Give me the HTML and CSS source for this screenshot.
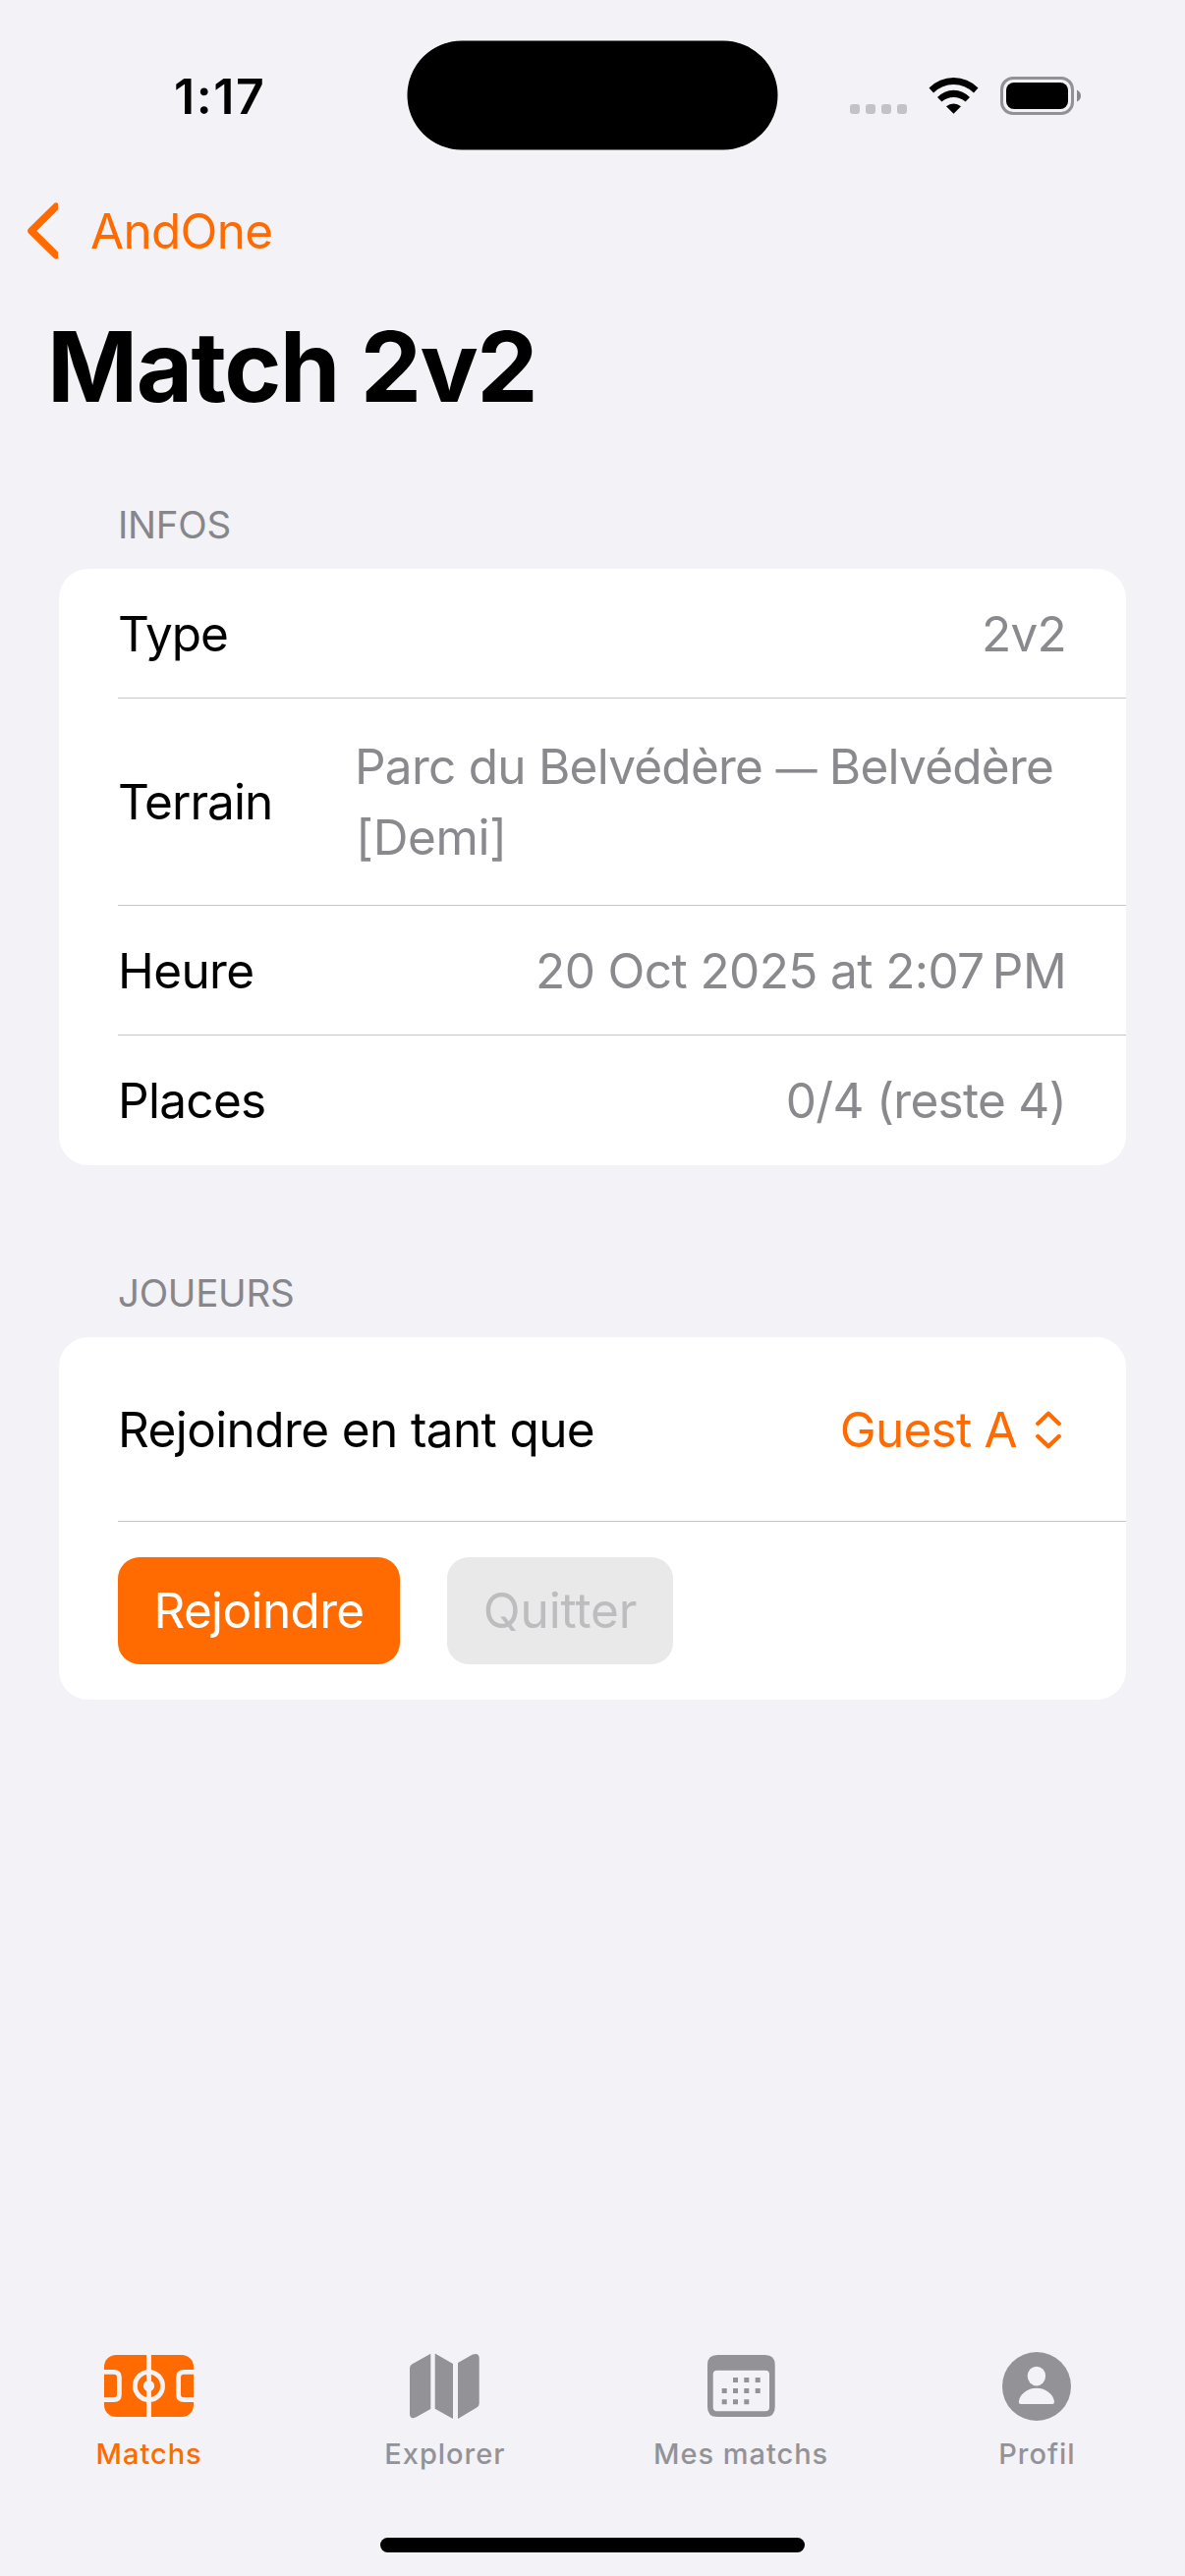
FILE: index.html
```html
<!DOCTYPE html>
<html lang="fr">
<head>
<meta charset="utf-8">
<title>Match 2v2</title>
<link rel="stylesheet" href="styles.css">
</head>
<body>
<div class="screen">
  <div class="status">
    <span class="time">1:17</span>
    <span class="island"></span>
    <div class="indicators">
      <svg class="cell" width="58" height="40" viewBox="0 0 58 40"><rect x="0" y="28" width="10" height="10" rx="3"/><rect x="16" y="28" width="10" height="10" rx="3"/><rect x="32" y="28" width="10" height="10" rx="3"/><rect x="48" y="28" width="10" height="10" rx="3"/></svg>
      <svg class="wifi" width="51" height="40" viewBox="0 0 51 40"><path d="M.5 11.5A35 35 0 0 1 50.5 11.5L46 16.5A29 29 0 0 0 5 16.5ZM9 21A22.5 22.5 0 0 1 42 21L37.5 25.5A18 18 0 0 0 13.500 25.500ZM18 30.200A12 12 0 0 1 33 30.200L25.500 37.800Z"/></svg>
      <svg class="battery" width="83" height="40" viewBox="0 0 83 40"><rect x="1.500" y="1.500" width="72" height="36" rx="11.500" fill="none" stroke="#929295" stroke-width="3"/><rect x="6" y="6" width="63" height="27" rx="8"/><path fill="#88888b" d="M78 13.500Q82 15.500 82 19.500T78 25.500Z"/></svg>
    </div>
  </div>
  <nav class="navbar">
    <svg width="34" height="60" viewBox="0 0 34 60"><path d="M32 5.300L7 30L32 54.700" fill="none" stroke="currentColor" stroke-width="7.500" stroke-linecap="round" stroke-linejoin="round"/></svg>
    <span>AndOne</span>
  </nav>
  <h1 class="title">Match 2v2</h1>

  <section class="section">
    <h2 class="heading">INFOS</h2>
    <div class="card">
      <div class="row"><span class="tight">Type</span><span class="value">2v2</span></div>
      <div class="row tall"><span class="tight">Terrain</span><span class="value long">Parc du Belvédère <span class="dash">—</span> Belvédère <span class="court">[Demi]</span></span></div>
      <div class="row"><span class="loose">Heure</span><span class="value date">20 Oct 2025 at 2:07&#8239;PM</span></div>
      <div class="row"><span>Places</span><span class="value">0/4 (reste 4)</span></div>
    </div>
  </section>

  <section class="section">
    <h2 class="heading">JOUEURS</h2>
    <div class="card">
      <div class="row picker"><span class="prompt">Rejoindre en tant que</span>
        <span class="choice">Guest A
          <svg width="26" height="39" viewBox="0 0 26 39"><path d="M2.300 13L13 2.800L23.700 13M2.300 26L13 36.200L23.700 26" fill="none" stroke="currentColor" stroke-width="4.300" stroke-linecap="round" stroke-linejoin="round"/></svg>
        </span>
      </div>
      <div class="row actions"><button class="btn join">Rejoindre</button><button class="btn leave" disabled>Quitter</button></div>
    </div>
  </section>

  <footer class="tabbar">
    <div class="tabs">
      <div class="tab active">
        <svg width="91" height="70" viewBox="0 -3 91 70"><rect width="91" height="63" rx="12" fill="currentColor"/><g fill="none" stroke="#f2f2f7" stroke-width="4.800"><path d="M45.500 0V63"/><circle cx="45.500" cy="31.500" r="14.100"/><path d="M0 17.300H10Q15.400 17.300 15.400 22.700V40.300Q15.400 45.700 10 45.700H0M91 17.300H81Q75.600 17.300 75.600 22.700V40.300Q75.600 45.700 81 45.700H91"/></g><circle cx="45.500" cy="31.500" r="5.600" fill="#f2f2f7"/></svg>
        <span>Matchs</span>
      </div>
      <div class="tab">
        <svg width="71" height="70" viewBox="0 -1 71 70" fill="currentColor"><path d="M21.300 .700V57L6.500 65.300Q0 68 0 62V15.500Q0 12.700 2.500 11.200ZM25.700 .400L44 11V66.900L25.700 56.700ZM49 10L64 1.600Q70.700-.800 70.700 5.500V51.500Q70.700 54 68.200 55.500L49 66.900Z"/></svg>
        <span>Explorer</span>
      </div>
      <div class="tab">
        <svg width="69" height="70" viewBox="0 -3 69 70" fill="currentColor"><path fill-rule="evenodd" d="M10 0H58.700Q68.700 0 68.700 10V53Q68.700 63 58.700 63H10Q0 63 0 53V10Q0 0 10 0ZM9.700 15.700Q5.700 15.700 5.700 19.700V53.300Q5.700 57.300 9.700 57.300H59Q63 57.300 63 53.300V19.700Q63 15.700 59 15.700Z"/><path d="M26 23h5v5h-5zM37.300 23h5v5h-5zM48.700 23h5v5h-5zM14.700 34h5v5h-5zM26 34h5v5h-5zM37.300 34h5v5h-5zM48.700 34h5v5h-5zM14.700 45.300h5v5h-5zM26 45.300h5v5h-5zM37.300 45.300h5v5h-5z"/></svg>
        <span>Mes matchs</span>
      </div>
      <div class="tab">
        <svg width="70" height="70" viewBox="0 0 70 70"><circle cx="35" cy="35" r="35" fill="currentColor"/><g fill="#f2f2f7"><ellipse cx="34.900" cy="24.600" rx="9.200" ry="9.900"/><path d="M18.700 53Q16.800 53 16.800 50.800C17.500 43 25.500 36.700 34.900 36.700S52.300 43 53 50.800Q53 53 51.100 53Z"/></g></svg>
        <span>Profil</span>
      </div>
    </div>
    <div class="home"></div>
  </footer>
</div>
</body>
</html>
```
FILE: styles.css
```css
* { box-sizing: border-box; }
body {
  margin: 0;
  background: #f2f2f7;
  color: #000;
  font: 400 49.5px/72px Inter, "Liberation Sans", sans-serif;
  letter-spacing: -0.7px;
}
svg { display: block; flex: none; }
.screen { width: 1206px; height: 2622px; display: flex; flex-direction: column; }

.status {
  display: grid;
  grid-template-columns: 415px 376px 415px;
  align-items: center;
  height: 152px;
  padding-top: 42px;
}
.time { padding: 1px 0 0 177px; font-weight: 600; font-size: 50px; letter-spacing: 1.59px; }
.island { height: 110px; border-radius: 55px; background: #000; box-shadow: 0 0 0 0.5px #000; }
.indicators { display: flex; padding: 2px 0 0 74px; }
.cell { fill: #c3c2c7; }
.wifi { margin-left: 22px; }
.battery { margin-left: 22px; }

.navbar {
  display: flex;
  align-items: center;
  gap: 33px;
  height: 118px;
  margin-top: 24px;
  padding-left: 25px;
  color: #ff6b00;
}
.title {
  margin: 19px 0 0;
  padding-left: 48px;
  font-size: 99px;
  line-height: 120px;
  font-weight: 700;
  letter-spacing: -1.6px;
}
.section { margin: 77px 60px 0; }
.title + .section { margin-top: 76px; }
.heading {
  margin: 0;
  padding-left: 60px;
  font-size: 38.5px;
  font-weight: 400;
  line-height: 50px;
  height: 70px;
  letter-spacing: -0.28px;
  color: #86868b;
}
.section + .section .heading { height: 98px; padding-top: 28px; }
.card { background: #fff; border-radius: 30px; overflow: hidden; }
.row {
  display: flex;
  align-items: center;
  height: 132px;
  margin-left: 60px;
  padding-right: 61px;
  box-shadow: inset 0 -1px #c6c6c8;
}
.row:last-child { box-shadow: none; }
.tall { height: 211px; padding-bottom: 2px; }
.tight { letter-spacing: -0.98px; }
.loose { letter-spacing: -0.6px; }
.value { margin-left: auto; color: #8a8a8e; }
.long { width: 724px; letter-spacing: -0.75px; }
.dash { display: inline-block; font-size: 42px; line-height: 1; }
.court { margin-left: 1px; letter-spacing: -0.4px; }
.date { letter-spacing: -0.6px; }
.picker { height: 188px; padding-right: 66px; }
.prompt { letter-spacing: -0.61px; }
.choice { display: flex; align-items: center; gap: 19px; margin-left: auto; color: #ff6b00; letter-spacing: -0.75px; }
.actions { height: 181px; gap: 48px; }
.btn {
  height: 109px;
  padding: 0 36px 2px;
  border: 0;
  border-radius: 22px;
  font: inherit;
  letter-spacing: -0.63px;
}
.join { width: 287px; background: #ff6b00; color: #fff; }
.leave { width: 230px; background: #e9e9ea; color: #bdbdbf; letter-spacing: -0.11px; }

.tabbar { margin-top: auto; height: 228px; display: flex; flex-direction: column; align-items: center; }
.tabs { display: grid; grid-template-columns: repeat(4, 1fr); width: 100%; padding-left: 1px; }
.tab {
  display: flex;
  flex-direction: column;
  align-items: center;
  gap: 16px;
  font-size: 29px;
  font-weight: 500;
  line-height: 35px;
  letter-spacing: 0.97px;
  color: #929297;
}
.active { color: #ff6b00; }
.home { width: 432px; height: 15px; margin-top: 68px; border-radius: 8px; background: #000; }
```
